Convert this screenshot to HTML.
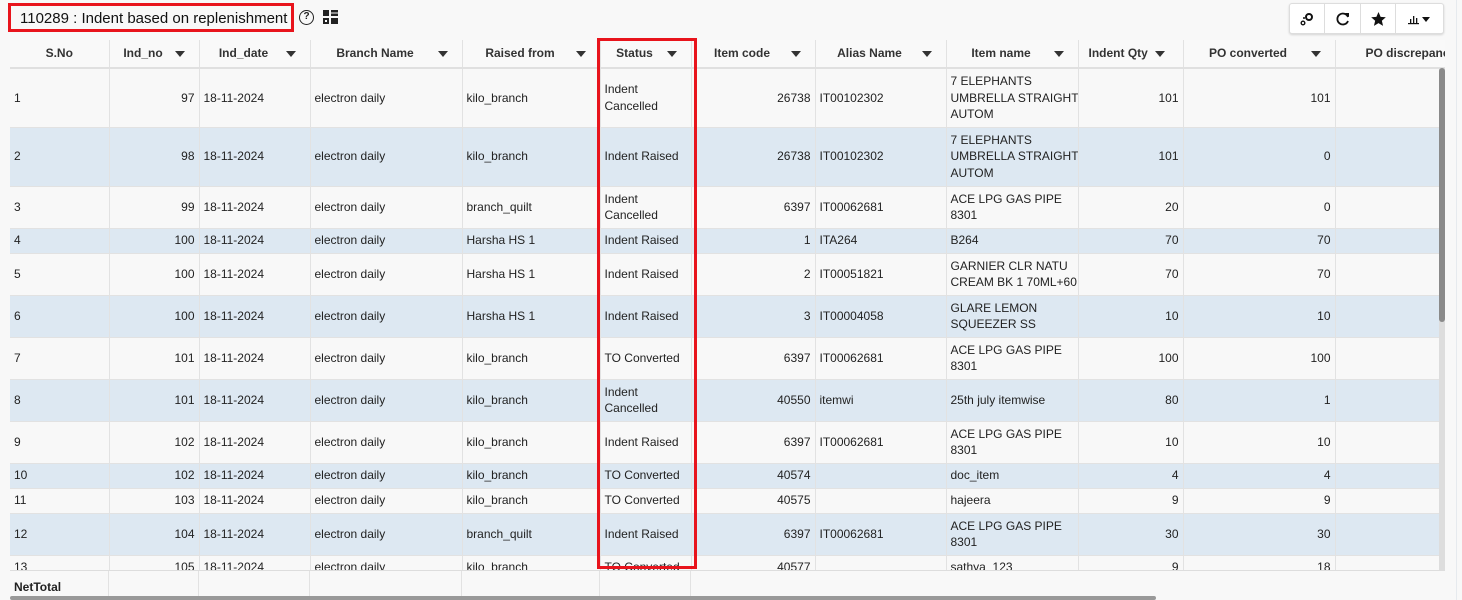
<!DOCTYPE html>
<html><head><meta charset="utf-8"><style>
*{box-sizing:border-box;margin:0;padding:0}
body{width:1462px;height:600px;overflow:hidden;background:#f8f8f8;font-family:"Liberation Sans",sans-serif;font-size:12px;color:#222;position:relative}
.title{position:absolute;left:8px;top:3px;width:286px;height:29px;border:3px solid #e8141c;font-size:15px;padding:4px 0 0 9px;color:#111;white-space:nowrap}
.help{position:absolute;left:299px;top:10px;width:15px;height:15px;border:1.6px solid #222;border-radius:50%;font-size:10px;font-weight:bold;text-align:center;line-height:12px}
.grid{position:absolute;left:323px;top:10px}
.tb{position:absolute;left:1289px;top:3px;height:31px;width:155px;border:1px solid #ddd;border-radius:3px;background:#fff;box-shadow:0 1px 2px rgba(0,0,0,.15);display:flex}
.tb div{flex:1;border-right:1px solid #ddd;display:flex;align-items:center;justify-content:center}
.tb div:last-child{border-right:0;flex:1.35}
.wrap{position:absolute;left:10px;top:40px;width:1435px;height:530px;overflow:hidden}
table{border-collapse:collapse;table-layout:fixed;width:1435px}
td,th{border-right:1px solid #e2e2e2;border-bottom:1px solid #e2e2e2;padding:0 4px;line-height:16.5px;vertical-align:middle;white-space:nowrap;overflow:hidden}
th{height:28px;font-weight:bold;color:#333;background:#f9f9f9;text-align:center;position:relative;border-bottom:2px solid #e0e0e0;padding-right:26px}
th .a{position:absolute;right:14px;top:11px;width:0;height:0;border-left:5px solid transparent;border-right:5px solid transparent;border-top:6px solid #333}
td.r{text-align:right}
tr.b td{background:#dde8f2}
tr.w td{background:#f8f8f8}
.foot{position:absolute;left:10px;top:570px;width:1435px;height:27px;border-top:1px solid #ddd;background:#f8f8f8}
.foot div{position:absolute;top:0;height:27px;border-right:1px solid #e2e2e2}
.hs{position:absolute;left:10px;top:596px;width:1146px;height:4px;background:#999;border-radius:2px}
.vs{position:absolute;left:1439px;top:68px;width:6px;height:502px;background:#ddd}
.vs div{width:6px;height:254px;background:#8a8a8a;border-radius:3px}
.red2{position:absolute;left:597px;top:38px;width:100px;height:531px;border:3px solid #e8141c}
.rb{position:absolute;left:1456px;top:0;width:1px;height:600px;background:#e6eaee}
</style></head><body>
<div class="title">110289 : Indent based on replenishment</div>
<div class="help">?</div>
<svg class="grid" width="15" height="14" viewBox="0 0 15 14"><rect x="0" y="0" width="6" height="6" fill="#222"/><rect x="8" y="0" width="7" height="2.5" fill="#222"/><rect x="8" y="3.5" width="7" height="2.5" fill="#222"/><rect x="0" y="8" width="6" height="6" fill="#222"/><rect x="8" y="8" width="7" height="6" fill="#222"/><rect x="2" y="10" width="2" height="2" fill="#fff"/></svg>
<div class="tb">
<div><svg width="14" height="14" viewBox="0 0 14 14"><circle cx="9" cy="5" r="3" fill="none" stroke="#111" stroke-width="2"/><circle cx="3" cy="11" r="1.8" fill="none" stroke="#111" stroke-width="1.4"/><circle cx="4" cy="6" r="1" fill="#111"/></svg></div>
<div><svg width="14" height="14" viewBox="0 0 14 14"><path d="M12 5A5.5 5.5 0 1 0 12 9" fill="none" stroke="#111" stroke-width="1.8"/><path d="M9 1L13 1L13 5Z" fill="#111"/></svg></div>
<div><svg width="15" height="14" viewBox="0 0 24 23"><path d="M12 0l3.5 8 8.5.7-6.5 5.6 2 8.4L12 18.3 4.5 22.7l2-8.4L0 8.7 8.5 8z" fill="#111"/></svg></div>
<div><svg width="24" height="12" viewBox="0 0 24 12"><rect x="0" y="10" width="11" height="1.2" fill="#111"/><rect x="2" y="6" width="1.3" height="4" fill="#111"/><rect x="5" y="3" width="1.3" height="7" fill="#111"/><rect x="8" y="5" width="1.3" height="5" fill="#111"/><path d="M14 4h8l-4 5z" fill="#111"/></svg></div>
</div>
<div class="wrap"><table>
<colgroup><col style="width:99px"><col style="width:90px"><col style="width:111px"><col style="width:152px"><col style="width:138px"><col style="width:91px"><col style="width:124px"><col style="width:131px"><col style="width:132px"><col style="width:105px"><col style="width:152px"><col style="width:110px"></colgroup>
<tr><th style="padding-right:4px">S.No</th><th>Ind_no<span class="a"></span></th><th>Ind_date<span class="a"></span></th><th>Branch Name<span class="a"></span></th><th>Raised from<span class="a"></span></th><th>Status<span class="a"></span></th><th>Item code<span class="a"></span></th><th>Alias Name<span class="a"></span></th><th>Item name<span class="a"></span></th><th style="text-align:left;padding-left:10px">Indent Qty<span class="a" style="right:18px"></span></th><th>PO converted<span class="a"></span></th><th style="text-align:left;padding-left:30px">PO discrepancy</th></tr>
<tr class="w" style="height:59px"><td>1</td><td class="r">97</td><td>18-11-2024</td><td>electron daily</td><td>kilo_branch</td><td>Indent<br>Cancelled</td><td class="r">26738</td><td>IT00102302</td><td>7 ELEPHANTS<br>UMBRELLA STRAIGHT<br>AUTOM</td><td class="r">101</td><td class="r">101</td><td></td></tr>
<tr class="b" style="height:59px"><td>2</td><td class="r">98</td><td>18-11-2024</td><td>electron daily</td><td>kilo_branch</td><td>Indent Raised</td><td class="r">26738</td><td>IT00102302</td><td>7 ELEPHANTS<br>UMBRELLA STRAIGHT<br>AUTOM</td><td class="r">101</td><td class="r">0</td><td></td></tr>
<tr class="w" style="height:42px"><td>3</td><td class="r">99</td><td>18-11-2024</td><td>electron daily</td><td>branch_quilt</td><td>Indent<br>Cancelled</td><td class="r">6397</td><td>IT00062681</td><td>ACE LPG GAS PIPE<br>8301</td><td class="r">20</td><td class="r">0</td><td></td></tr>
<tr class="b" style="height:25px"><td>4</td><td class="r">100</td><td>18-11-2024</td><td>electron daily</td><td>Harsha HS 1</td><td>Indent Raised</td><td class="r">1</td><td>ITA264</td><td>B264</td><td class="r">70</td><td class="r">70</td><td></td></tr>
<tr class="w" style="height:42px"><td>5</td><td class="r">100</td><td>18-11-2024</td><td>electron daily</td><td>Harsha HS 1</td><td>Indent Raised</td><td class="r">2</td><td>IT00051821</td><td>GARNIER CLR NATU<br>CREAM BK 1 70ML+60</td><td class="r">70</td><td class="r">70</td><td></td></tr>
<tr class="b" style="height:42px"><td>6</td><td class="r">100</td><td>18-11-2024</td><td>electron daily</td><td>Harsha HS 1</td><td>Indent Raised</td><td class="r">3</td><td>IT00004058</td><td>GLARE LEMON<br>SQUEEZER SS</td><td class="r">10</td><td class="r">10</td><td></td></tr>
<tr class="w" style="height:42px"><td>7</td><td class="r">101</td><td>18-11-2024</td><td>electron daily</td><td>kilo_branch</td><td>TO Converted</td><td class="r">6397</td><td>IT00062681</td><td>ACE LPG GAS PIPE<br>8301</td><td class="r">100</td><td class="r">100</td><td></td></tr>
<tr class="b" style="height:42px"><td>8</td><td class="r">101</td><td>18-11-2024</td><td>electron daily</td><td>kilo_branch</td><td>Indent<br>Cancelled</td><td class="r">40550</td><td>itemwi</td><td>25th july itemwise</td><td class="r">80</td><td class="r">1</td><td></td></tr>
<tr class="w" style="height:42px"><td>9</td><td class="r">102</td><td>18-11-2024</td><td>electron daily</td><td>kilo_branch</td><td>Indent Raised</td><td class="r">6397</td><td>IT00062681</td><td>ACE LPG GAS PIPE<br>8301</td><td class="r">10</td><td class="r">10</td><td></td></tr>
<tr class="b" style="height:25px"><td>10</td><td class="r">102</td><td>18-11-2024</td><td>electron daily</td><td>kilo_branch</td><td>TO Converted</td><td class="r">40574</td><td></td><td>doc_item</td><td class="r">4</td><td class="r">4</td><td></td></tr>
<tr class="w" style="height:25px"><td>11</td><td class="r">103</td><td>18-11-2024</td><td>electron daily</td><td>kilo_branch</td><td>TO Converted</td><td class="r">40575</td><td></td><td>hajeera</td><td class="r">9</td><td class="r">9</td><td></td></tr>
<tr class="b" style="height:42px"><td>12</td><td class="r">104</td><td>18-11-2024</td><td>electron daily</td><td>branch_quilt</td><td>Indent Raised</td><td class="r">6397</td><td>IT00062681</td><td>ACE LPG GAS PIPE<br>8301</td><td class="r">30</td><td class="r">30</td><td></td></tr>
<tr class="w" style="height:25px"><td>13</td><td class="r">105</td><td>18-11-2024</td><td>electron daily</td><td>kilo_branch</td><td>TO Converted</td><td class="r">40577</td><td></td><td>sathya_123</td><td class="r">9</td><td class="r">18</td><td></td></tr>
</table></div>
<div class="vs"><div></div></div>
<div class="foot"><div style="left:0;width:99px;padding:9px 0 0 4px;font-weight:bold;border-right:1px solid #e2e2e2">NetTotal</div><div style="left:99px;width:90px"></div><div style="left:189px;width:111px"></div><div style="left:300px;width:152px"></div><div style="left:452px;width:138px"></div><div style="left:590px;width:91px"></div></div>
<div class="hs"></div>
<div class="red2"></div>
<div class="rb"></div>
</body></html>
